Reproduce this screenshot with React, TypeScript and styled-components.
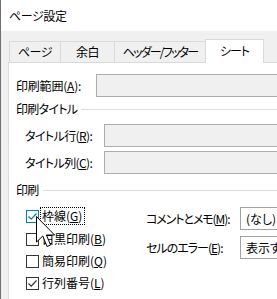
import React from "react";
import styled, { createGlobalStyle } from "styled-components";

const Global = createGlobalStyle`
  html, body { margin: 0; padding: 0; overflow: hidden; background: #f0f0f0; }
  body {
    font-family: "Noto Sans CJK JP", "Noto Sans", sans-serif;
    font-size: 12px;
    color: #000;
    font-feature-settings: "palt" 1;
  }
`;

const Window = styled.div`
  position: relative;
  width: 277px;
  height: 299px;
  overflow: hidden;
  box-sizing: border-box;
  border-left: 1px solid #6f6f6f;
  background: #f0f0f0;
`;

const TitleBar = styled.div`
  height: 31px;
  background: #fff;
  display: flex;
  align-items: center;
  padding-left: 8px;
  font-size: 12px;
  line-height: 14px;
  letter-spacing: -0.4px;
  width: 420px;
`;

const Body = styled.div`
  padding: 8px 0 0 7px;
  width: 480px;
`;

const TabList = styled.div`
  display: flex;
  align-items: flex-start;
  height: 24px;
  margin-bottom: -1px;
  padding-left: 1px;
  position: relative;
  z-index: 2;
`;

const Tab = styled.div<{ $w: number; $active?: boolean; $ls?: number }>`
  box-sizing: border-box;
  width: ${(p) => p.$w}px;
  height: ${(p) => (p.$active ? 24 : 21)}px;
  margin-top: ${(p) => (p.$active ? 0 : 2)}px;
  margin-right: -1px;
  border: 1px solid #d9d9d9;
  border-bottom: none;
  background: ${(p) => (p.$active ? "#fff" : "#f0f0f0")};
  display: flex;
  align-items: center;
  justify-content: center;
  padding-bottom: ${(p) => (p.$active ? 2 : 0)}px;
  font-size: 12px;
  line-height: 14px;
  letter-spacing: ${(p) => p.$ls ?? -0.5}px;
  white-space: nowrap;
`;

const Panel = styled.div`
  background: #fff;
  border: 1px solid #d9d9d9;
  min-height: 260px;
  padding: 11px 0 0 0;
  position: relative;
  z-index: 1;
`;

const FieldRow = styled.div<{ $indent: number; $labelW: number; $mt?: number }>`
  display: grid;
  grid-template-columns: ${(p) => p.$labelW}px 1fr;
  align-items: center;
  height: 23px;
  margin-top: ${(p) => p.$mt ?? 0}px;
  padding-left: ${(p) => p.$indent}px;
`;

const Label = styled.span<{ $ls?: number }>`
  white-space: nowrap;
  line-height: 14px;
  letter-spacing: ${(p) => p.$ls ?? -0.6}px;
`;

const Key = styled.span`
  text-decoration: underline;
  text-underline-offset: 1px;
`;

const RefInput = styled.div`
  box-sizing: border-box;
  height: 23px;
  background: #f0f0f0;
  border: 1px solid #acacac;
`;

const GroupHeader = styled.div<{ $mt: number }>`
  display: flex;
  align-items: center;
  gap: 4px;
  height: 20px;
  margin-top: ${(p) => p.$mt}px;
  padding-left: 7px;
  line-height: 14px;
  letter-spacing: -0.7px;
  &::after {
    content: "";
    flex: 1;
    height: 1px;
    background: #dcdcdc;
  }
`;

const PrintSection = styled.div`
  display: grid;
  grid-template-columns: 137px 1fr;
  margin-top: 5px;
`;

const CheckCol = styled.div`
  display: flex;
  flex-direction: column;
  padding-left: 17px;
`;

const CheckRow = styled.div<{ $first?: boolean }>`
  display: flex;
  align-items: center;
  height: 22px;
  margin-bottom: ${(p) => (p.$first ? 1 : 0)}px;
`;

const Box = styled.span<{ $focus?: boolean }>`
  box-sizing: border-box;
  width: 13px;
  height: 13px;
  flex: none;
  border: 1px solid ${(p) => (p.$focus ? "#0078d7" : "#333")};
  background: #fff;
  display: flex;
  align-items: center;
  justify-content: center;
`;

const CheckLabel = styled.span<{ $focus?: boolean }>`
  margin-left: 1px;
  padding: 1px 2px 1px 1px;
  border: 1px dotted ${(p) => (p.$focus ? "#000" : "transparent")};
  line-height: 14px;
  white-space: nowrap;
`;

const RightCol = styled.div`
  display: flex;
  flex-direction: column;
  gap: 6px;
  margin-top: 2px;
`;

const ComboRow = styled.div`
  display: grid;
  grid-template-columns: 94px 1fr;
  align-items: center;
  height: 23px;
`;

const Combo = styled.div`
  box-sizing: border-box;
  height: 23px;
  border: 1px solid #a2a2a2;
  background: #fff;
  display: flex;
  align-items: center;
  padding-left: 5px;
  line-height: 14px;
  white-space: nowrap;
`;

const Cursor = styled.svg`
  position: absolute;
  left: 35px;
  top: 216px;
  z-index: 5;
`;

const Check = ({ color }: { color: string }) => (
  <svg width="11" height="11" viewBox="0 0 11 11">
    <path d="M1.5 5.5 L4.2 8.2 L9.5 2.5" fill="none" stroke={color} strokeWidth="1.2" />
  </svg>
);

export default function App() {
  return (
    <>
      <Global />
      <Window>
        <TitleBar>ページ設定</TitleBar>
        <Body>
          <TabList>
            <Tab $w={52}>ページ</Tab>
            <Tab $w={55}>余白</Tab>
            <Tab $w={92} $ls={-1.8}>ヘッダー/フッター</Tab>
            <Tab $w={59} $active $ls={-1}>シート</Tab>
          </TabList>
          <Panel>
            <FieldRow $indent={7} $labelW={80}>
              <Label $ls={-0.2}>印刷範囲(<Key>A</Key>):</Label>
              <RefInput />
            </FieldRow>
            <GroupHeader $mt={2}>印刷タイトル</GroupHeader>
            <FieldRow $indent={16} $labelW={79} $mt={5}>
              <Label>タイトル行(<Key>R</Key>):</Label>
              <RefInput />
            </FieldRow>
            <FieldRow $indent={16} $labelW={79} $mt={4}>
              <Label>タイトル列(<Key>C</Key>):</Label>
              <RefInput />
            </FieldRow>
            <GroupHeader $mt={6}>印刷</GroupHeader>
            <PrintSection>
              <CheckCol>
                <CheckRow $first>
                  <Box $focus><Check color="#0078d7" /></Box>
                  <CheckLabel $focus>枠線(<Key>G</Key>)</CheckLabel>
                </CheckRow>
                <CheckRow>
                  <Box />
                  <CheckLabel>白黒印刷(<Key>B</Key>)</CheckLabel>
                </CheckRow>
                <CheckRow>
                  <Box />
                  <CheckLabel>簡易印刷(<Key>Q</Key>)</CheckLabel>
                </CheckRow>
                <CheckRow>
                  <Box><Check color="#333" /></Box>
                  <CheckLabel>行列番号(<Key>L</Key>)</CheckLabel>
                </CheckRow>
              </CheckCol>
              <RightCol>
                <ComboRow>
                  <Label $ls={-1.1}>コメントとメモ(<Key>M</Key>):</Label>
                  <Combo>(なし)</Combo>
                </ComboRow>
                <ComboRow>
                  <Label $ls={-1}>セルのエラー(<Key>E</Key>):</Label>
                  <Combo>表示する</Combo>
                </ComboRow>
              </RightCol>
            </PrintSection>
          </Panel>
        </Body>
        <Cursor width="20" height="32" viewBox="0 0 20 32">
          <path
            d="M0.5 0.5 V26 L6.8 20 L11 30.5 L14.6 29 L10.4 19 H18.6 Z"
            fill="#fff"
            stroke="#000"
            strokeWidth="1"
            strokeLinejoin="miter"
          />
        </Cursor>
      </Window>
    </>
  );
}
